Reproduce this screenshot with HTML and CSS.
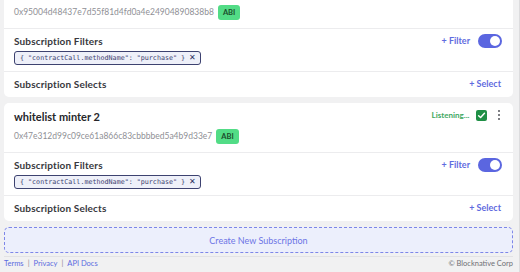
FILE: index.html
```html
<!DOCTYPE html>
<html>
<head>
    <title>Subscriptions</title>
    <link rel="stylesheet" href="styles.css">
</head>

<body>
    <div class="page">

        <!-- first subscription, scrolled so its title is above the fold -->
        <div class="card card-cut">
            <div class="card-head">
                <div class="address-row">
                    <span class="address">0x95004d48437e7d55f81d4fd0a4e24904890838b8</span>
                    <span class="abi">ABI</span>
                </div>
            </div>
            <div class="section">
                <div class="section-row">
                    <span class="section-title">Subscription Filters</span>
                    <div class="actions">
                        <span class="link-action">+ Filter</span>
                        <span class="toggle"><span class="knob"></span></span>
                    </div>
                </div>
                <div class="chip">
                    <span>{ "contractCall.methodName": "purchase" }</span>
                    <span class="chip-x">&#x2715;</span>
                </div>
            </div>
            <div class="section section-last">
                <div class="section-row">
                    <span class="section-title">Subscription Selects</span>
                    <span class="link-action">+ Select</span>
                </div>
            </div>
        </div>

        <div class="card">
            <div class="card-head head-full">
                <div class="title-row">
                    <span class="card-title">whitelist minter 2</span>
                    <div class="status">
                        <span class="listening">Listening...</span>
                        <span class="check">
                            <svg width="9" height="9" viewBox="0 0 10 10"><path d="M1.8 5.2 L4 7.3 L8.3 2.6" fill="none" stroke="#fff" stroke-width="1.6" stroke-linecap="round" stroke-linejoin="round"/></svg>
                        </span>
                        <span class="kebab"><i></i><i></i><i></i></span>
                    </div>
                </div>
                <div class="address-row">
                    <span class="address">0x47e312d99c09ce61a866c83cbbbbed5a4b9d33e7</span>
                    <span class="abi">ABI</span>
                </div>
            </div>
            <div class="section">
                <div class="section-row">
                    <span class="section-title">Subscription Filters</span>
                    <div class="actions">
                        <span class="link-action">+ Filter</span>
                        <span class="toggle"><span class="knob"></span></span>
                    </div>
                </div>
                <div class="chip">
                    <span>{ "contractCall.methodName": "purchase" }</span>
                    <span class="chip-x">&#x2715;</span>
                </div>
            </div>
            <div class="section section-last">
                <div class="section-row">
                    <span class="section-title">Subscription Selects</span>
                    <span class="link-action">+ Select</span>
                </div>
            </div>
        </div>

        <div class="create-box">Create New Subscription</div>

        <div class="footer">
            <div class="footer-links">
                <a href="#">Terms</a><span class="sep">|</span><a href="#">Privacy</a><span class="sep">|</span><a href="#">API Docs</a>
            </div>
            <span class="copyright">&copy; Blocknative Corp</span>
        </div>
    </div>
</body>
</html>
```

FILE: styles.css
```css
body {
    margin: 0;
    padding: 0;
    background-color: #f1f1f2;
    font-family: Lato, "DejaVu Sans", sans-serif;
    color: #2b2b2f;
}

.page {
    padding: 0 6px 0 4px;
    border-right: 1px solid #dcdcde;
    width: 509px;
    height: 272px;
    overflow: hidden;
}

.card {
    background-color: #fff;
    border-radius: 5px;
    margin-bottom: 6px;
}

.card-cut {
    border-top-left-radius: 0;
    border-top-right-radius: 0;
}

.card-head {
    padding: 5px 10px 8px 10px;
    border-bottom: 1px solid #ececee;
}

.head-full {
    padding-top: 6px;
}

.title-row {
    display: flex;
    justify-content: space-between;
    align-items: center;
    height: 16px;
    margin-bottom: 4px;
}

.card-title {
    font-size: 11px;
    font-weight: bold;
    color: #26262a;
    line-height: 16px;
}

.status {
    display: flex;
    align-items: center;
    margin-top: -4px;
}

.listening {
    color: #3ea85f;
    font-size: 8px;
    font-weight: bold;
    margin-right: 6px;
}

.check {
    width: 11px;
    height: 11px;
    border-radius: 2px;
    background-color: #1f8f45;
    display: flex;
    align-items: center;
    justify-content: center;
}

.kebab {
    display: flex;
    flex-direction: column;
    gap: 1.5px;
    margin-left: 11px;
    margin-right: 3px;
}

.kebab i {
    width: 2.5px;
    height: 2.5px;
    border-radius: 50%;
    background-color: #55565c;
}

.address-row {
    display: flex;
    align-items: center;
    height: 15px;
}

.address {
    color: #8f9096;
    font-size: 8.5px;
    line-height: 15px;
}

.abi {
    margin-left: 4px;
    background-color: #52dc86;
    color: #1b4d2c;
    font-size: 7.5px;
    font-weight: bold;
    height: 15px;
    line-height: 15px;
    padding: 0 5px;
    border-radius: 3px;
}

.section {
    padding: 5px 10px 6px 10px;
    border-bottom: 1px solid #ececee;
}

.section-last {
    border-bottom: none;
    padding: 5px 10px 6px 10px;
}

.section-row {
    display: flex;
    justify-content: space-between;
    align-items: center;
    height: 14px;
    line-height: 14px;
}

.section-title {
    font-size: 10px;
    font-weight: bold;
    color: #38383d;
    letter-spacing: 0.15px;
}

.actions {
    display: flex;
    align-items: center;
    gap: 6px;
}

.link-action {
    color: #5f6be0;
    font-size: 9px;
    font-weight: bold;
    margin-right: 2px;
}

.toggle {
    width: 24px;
    height: 14px;
    border-radius: 7px;
    background-color: #5b66e0;
    position: relative;
    margin-right: 1px;
}

.knob {
    position: absolute;
    top: 2px;
    right: 2px;
    width: 10px;
    height: 10px;
    border-radius: 50%;
    background-color: #fff;
}

.chip {
    display: flex;
    width: fit-content;
    align-items: center;
    margin-top: 3px;
    height: 12px;
    line-height: 12px;
    padding: 0 4px 0 5px;
    border: 1px solid #3d4270;
    border-radius: 3px;
    background-color: #eef0f9;
    font-family: "DejaVu Sans Mono", monospace;
    font-size: 6.7px;
    color: #3d4270;
    gap: 4px;
}

.chip-x {
    font-family: "DejaVu Sans", sans-serif;
    font-size: 8px;
    font-weight: bold;
    color: #2d3160;
}

.create-box {
    height: 24px;
    border: 1px dashed #7d86e8;
    border-radius: 5px;
    background-color: #eceffc;
    color: #6c75e6;
    font-size: 9px;
    display: flex;
    align-items: center;
    justify-content: center;
}

.footer {
    display: flex;
    justify-content: space-between;
    align-items: center;
    margin-top: 3px;
    font-size: 7.5px;
    line-height: 10px;
    border-top: 1px solid #e2e2e4;
    padding-top: 2px;
}

.footer-links a {
    color: #5b6be0;
    text-decoration: none;
}

.sep {
    color: #8a8b90;
    margin: 0 4px;
}

.copyright {
    color: #6f7075;
}
```
